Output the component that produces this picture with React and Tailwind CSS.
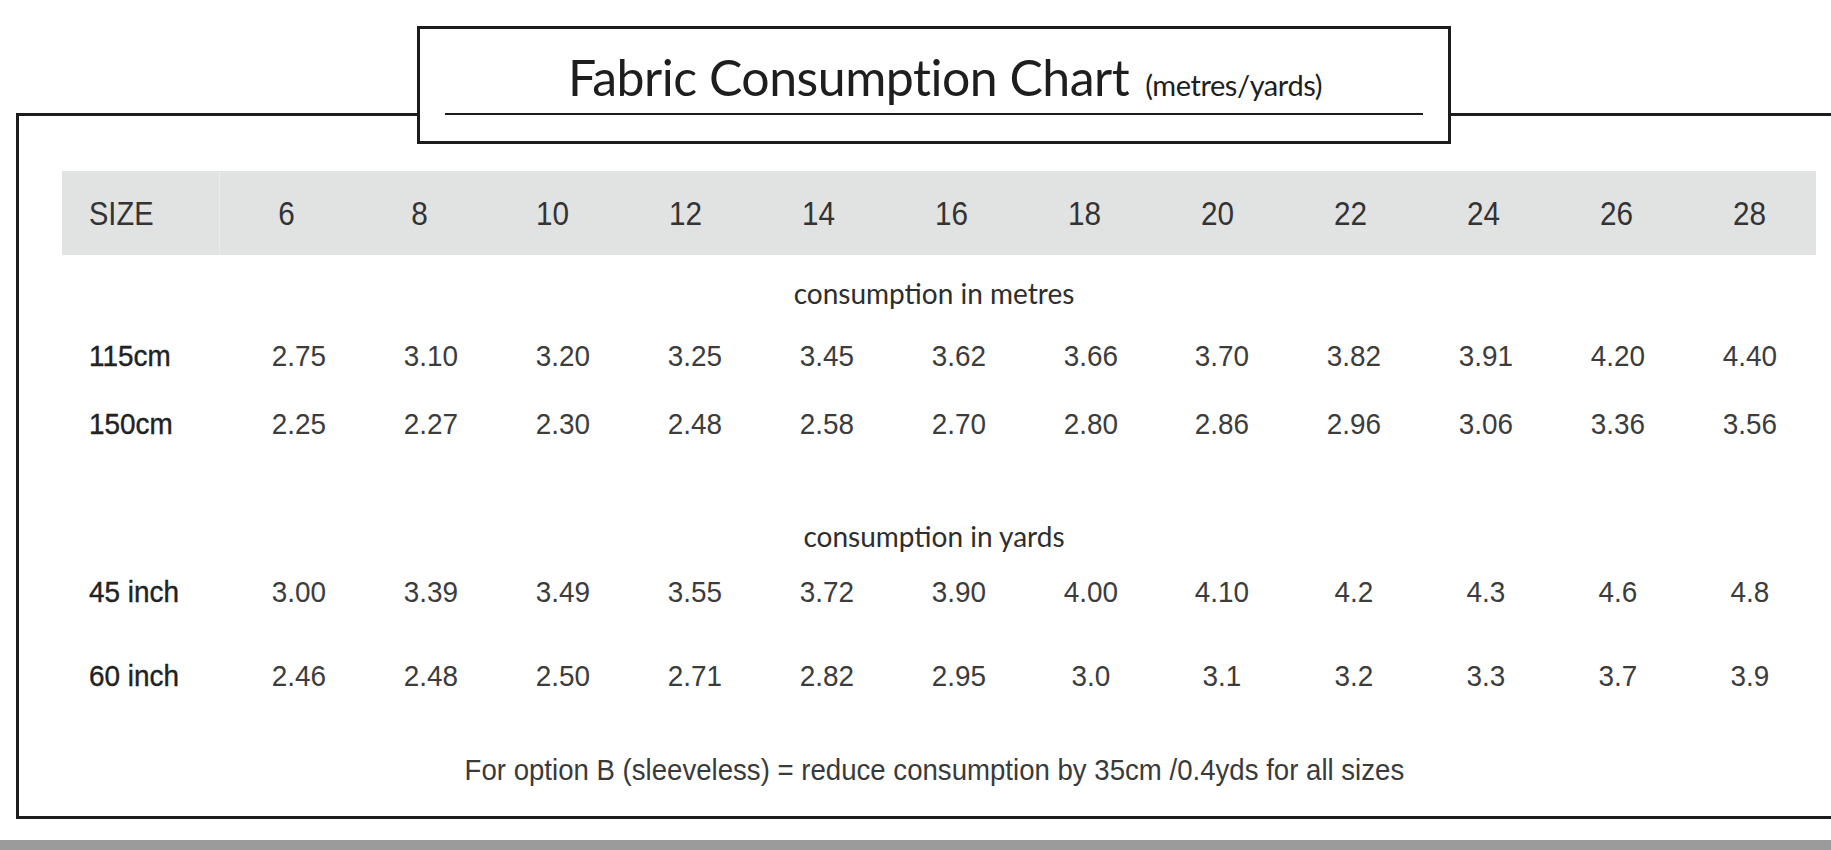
import React from 'react';

const sizes = ['6', '8', '10', '12', '14', '16', '18', '20', '22', '24', '26', '28'];

const metreRows = [
  { label: '115cm', values: ['2.75', '3.10', '3.20', '3.25', '3.45', '3.62', '3.66', '3.70', '3.82', '3.91', '4.20', '4.40'] },
  { label: '150cm', values: ['2.25', '2.27', '2.30', '2.48', '2.58', '2.70', '2.80', '2.86', '2.96', '3.06', '3.36', '3.56'] },
];

const yardRows = [
  { label: '45 inch', values: ['3.00', '3.39', '3.49', '3.55', '3.72', '3.90', '4.00', '4.10', '4.2', '4.3', '4.6', '4.8'] },
  { label: '60 inch', values: ['2.46', '2.48', '2.50', '2.71', '2.82', '2.95', '3.0', '3.1', '3.2', '3.3', '3.7', '3.9'] },
];

const arial = "font-['Liberation_Sans',Arial,sans-serif]";
const gothic = "font-['Lato','Open_Sans',sans-serif]";

const DataRow = ({ row, className }) => (
  <div className={`ml-[43px] w-[1754px] grid grid-cols-[171px_repeat(12,1fr)] items-center ${className}`}>
    <div className={`pl-[29px] origin-left scale-x-[0.93] text-[30px] leading-none text-[#222] [-webkit-text-stroke:0.4px_#222] ${arial}`}>
      {row.label}
    </div>
    {row.values.map((v, i) => (
      <div key={i} className={`text-center scale-x-[0.93] text-[30px] leading-none text-[#3c3c3c] ${arial}`}>
        {v}
      </div>
    ))}
  </div>
);

const SectionLabel = ({ children, className }) => (
  <div className={`ml-[43px] w-[1754px] pr-[10px] text-center text-[28px] leading-none text-[#2e2e2e] ${gothic} ${className}`}>
    {children}
  </div>
);

export default function App() {
  return (
    <div className="w-[1831px] h-[850px] bg-white overflow-hidden flex flex-col">
      {/* outer frame, runs off the right edge */}
      <div className="ml-[16px] mt-[113px] w-[1840px] h-[706px] shrink-0 border-[3px] border-[#1c1c1c] flex flex-col">
        {/* title box sitting over the top border */}
        <div className="relative -mt-[90px] ml-[398px] w-[1034px] h-[118px] shrink-0 border-[3px] border-[#1c1c1c] bg-white flex flex-col">
          <div className={`pt-[23px] pl-[22px] flex items-baseline justify-center text-[#1e1e1e] ${gothic}`}>
            <span className="text-[50px] leading-none tracking-[-0.01em]">Fabric Consumption Chart</span>
            <span className="ml-[16px] text-[29px] leading-none tracking-[-0.015em]">(metres/yards)</span>
          </div>
          <div className="mt-[11px] mx-[25px] h-[2px] bg-[#1c1c1c]" />
        </div>

        {/* size header */}
        <div className="mt-[27px] ml-[43px] w-[1754px] h-[84px] shrink-0 bg-[#e1e2e2] grid grid-cols-[158px_repeat(12,1fr)] items-center">
          <div className={`h-full flex items-center pl-[27px] border-r border-[#eaebeb] text-[33px] leading-none text-[#333] ${arial}`}>
            <span className="inline-block origin-left scale-x-[0.88]">SIZE</span>
          </div>
          {sizes.map((s) => (
            <div key={s} className={`text-center scale-x-[0.9] text-[33px] leading-none text-[#333] ${arial}`}>
              {s}
            </div>
          ))}
        </div>

        <SectionLabel className="mt-[24px]">consumption in metres</SectionLabel>
        <DataRow row={metreRows[0]} className="mt-[34px]" />
        <DataRow row={metreRows[1]} className="mt-[38px]" />

        <SectionLabel className="mt-[83px]">consumption in yards</SectionLabel>
        <DataRow row={yardRows[0]} className="mt-[27px]" />
        <DataRow row={yardRows[1]} className="mt-[54px]" />

        <div className={`mt-[64px] ml-[43px] w-[1754px] pr-[10px] text-center scale-x-[0.92] text-[30px] leading-none text-[#3a3a3a] ${arial}`}>
          For option B (sleeveless) = reduce consumption by 35cm /0.4yds for all sizes
        </div>
      </div>

      <div className="mt-[21px] h-[10px] shrink-0 bg-[#9b9b9b]" />
    </div>
  );
}
